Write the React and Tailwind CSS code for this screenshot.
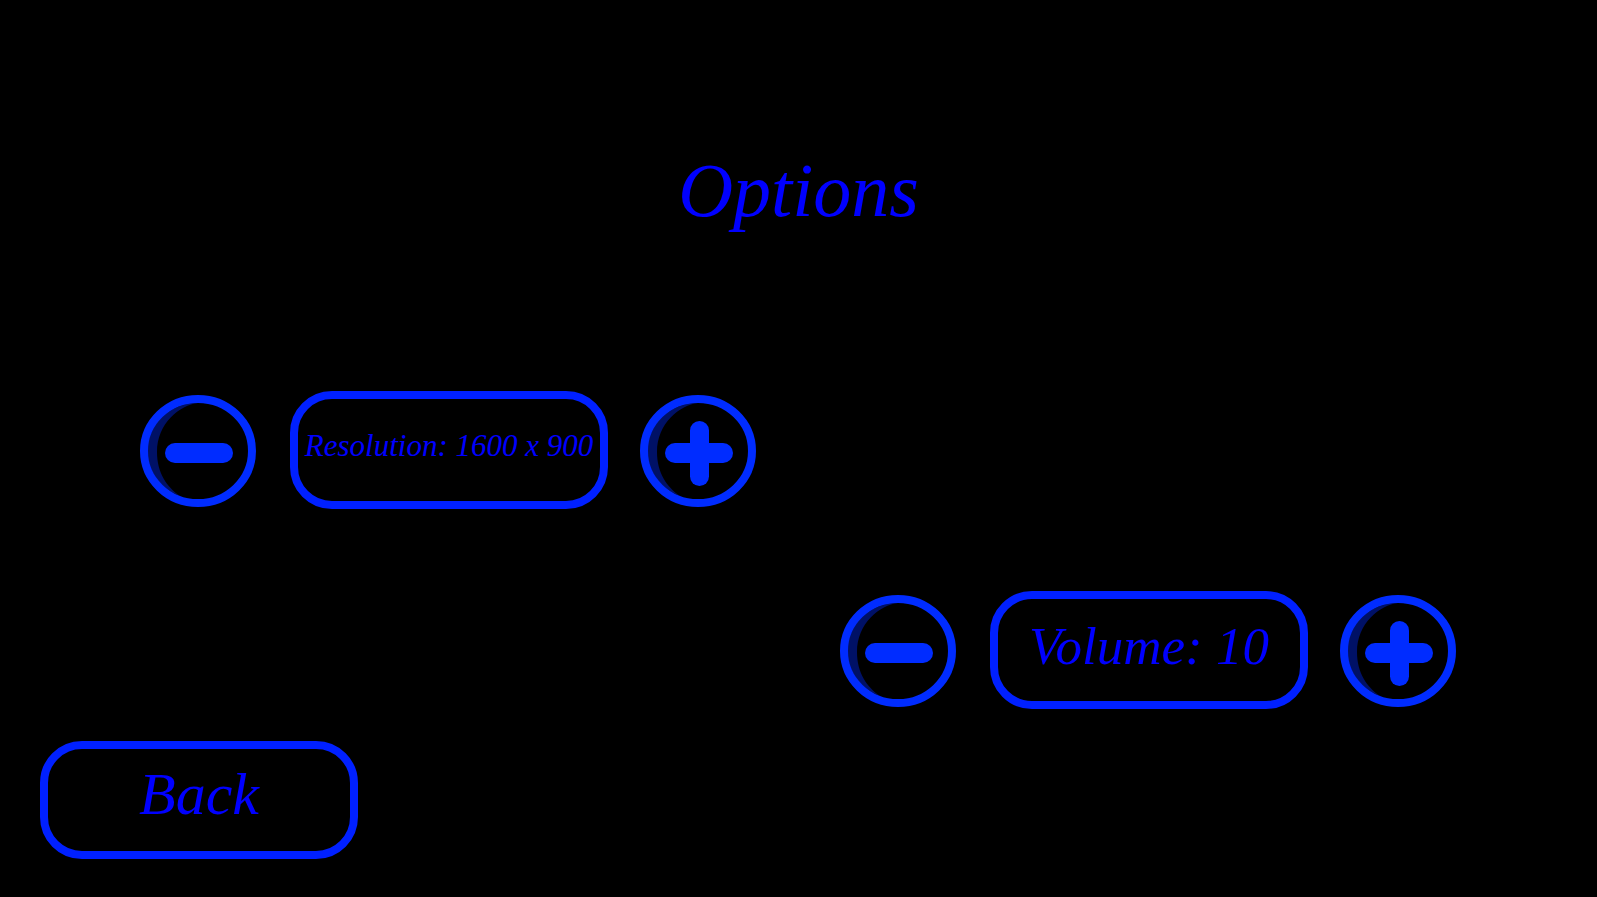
import { useState } from "react";

const RESOLUTIONS = ["1280 x 720", "1600 x 900", "1920 x 1080"];

function StepButton({ label, plus, onClick }) {
  return (
    <button type="button" aria-label={label} onClick={onClick} className="shrink-0 cursor-pointer rounded-full">
      <svg viewBox="0 0 118 118" className="block size-[118px]" aria-hidden="true">
        <path d="M58 12C40 14 17 32 17 61C17 82 27 96 40 105A50 48 0 0 1 58 12Z" fill="#001166" />
        <ellipse cx="58" cy="60" rx="54" ry="52" fill="none" stroke="#002cff" strokeWidth="8" />
        <rect x="25" y="52" width="68" height="20" rx="10" fill="#002cff" />
        {plus && <rect x="50" y="30" width="19" height="65" rx="9.5" fill="#002cff" />}
      </svg>
    </button>
  );
}

function Stepper({ name, children, onDecrease, onIncrease }) {
  return (
    <div role="group" aria-label={name} className="flex items-center gap-8">
      <StepButton label={`Decrease ${name}`} onClick={onDecrease} />
      <output className="flex h-[118px] w-[318px] items-center justify-center whitespace-nowrap rounded-[42px] border-8 border-[#0020ff] pb-2">
        {children}
      </output>
      <StepButton label={`Increase ${name}`} plus onClick={onIncrease} />
    </div>
  );
}

export default function App() {
  const [resolution, setResolution] = useState(1);
  const [volume, setVolume] = useState(10);

  return (
    <main className="flex min-h-screen flex-col bg-black pt-[152px] pb-[38px] font-['Liberation_Serif',serif] text-[#0000ff] italic">
      <h1 className="text-center text-[76px] leading-[76px]">Options</h1>

      <div className="mt-[163px] self-start pl-[140px]">
        <Stepper
          name="resolution"
          onDecrease={() => setResolution(Math.max(0, resolution - 1))}
          onIncrease={() => setResolution(Math.min(RESOLUTIONS.length - 1, resolution + 1))}
        >
          <span className="text-[31px] leading-10">Resolution: {RESOLUTIONS[resolution]}</span>
        </Stepper>
      </div>

      <div className="mt-[82px] self-end pr-[139px]">
        <Stepper
          name="volume"
          onDecrease={() => setVolume(Math.max(0, volume - 1))}
          onIncrease={() => setVolume(Math.min(10, volume + 1))}
        >
          <span className="text-[53px] leading-[60px]">Volume: {volume}</span>
        </Stepper>
      </div>

      <div className="mt-8 pl-10">
        <button
          type="button"
          className="flex h-[118px] w-[318px] cursor-pointer items-center justify-center rounded-[42px] border-8 border-[#0020ff] pb-3 text-[60px] leading-[60px] italic"
        >
          Back
        </button>
      </div>
    </main>
  );
}
